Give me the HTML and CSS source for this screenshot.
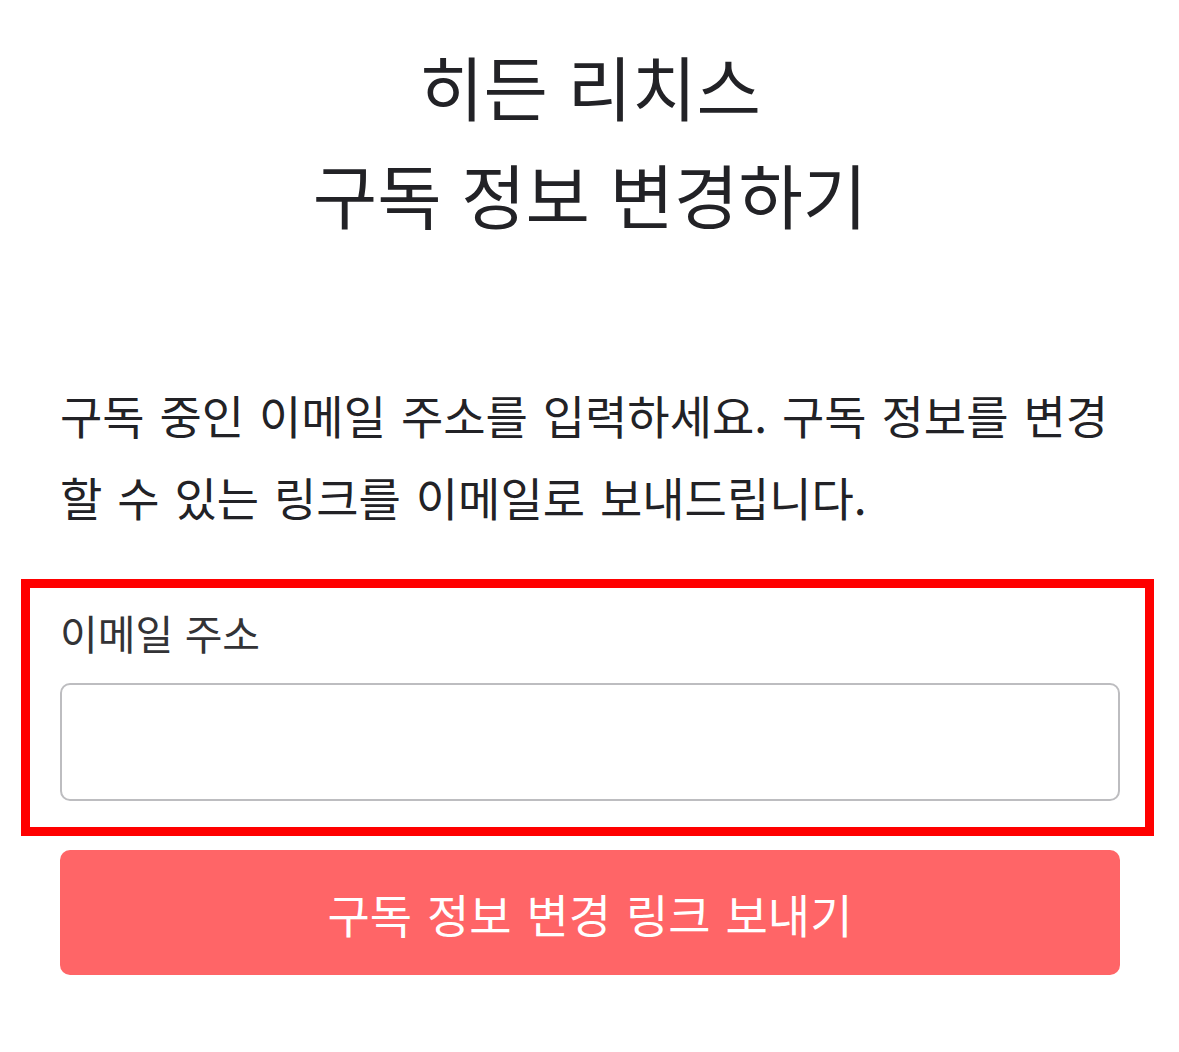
FILE: index.html
```html
<!DOCTYPE html>
<html lang="ko">
<head>
<meta charset="utf-8">
<title>히든 리치스 구독 정보 변경하기</title>
<link rel="stylesheet" href="styles.css">
</head>
<body>
<main class="page">
  <h1 class="title">히든 리치스<br>구독 정보 변경하기</h1>
  <p class="desc">구독 중인 이메일 주소를 입력하세요. 구독 정보를 변경할 수 있는 링크를 이메일로 보내드립니다.</p>
  <form class="form">
    <div class="field">
      <label class="label" for="email">이메일 주소</label>
      <input class="input" id="email" type="email">
    </div>
    <button class="button" type="button">구독 정보 변경 링크 보내기</button>
  </form>
</main>
</body>
</html>
```

FILE: styles.css
```css
* { box-sizing: border-box; }
html, body { margin: 0; padding: 0; background: #fff; }
body {
  font-family: "Noto Sans CJK KR", "Noto Sans", sans-serif;
  color: #222226;
}
.page {
  padding: 32px 59px 0 60px;
}
.title {
  margin: 0;
  text-align: center;
  font-size: 70px;
  font-weight: 400;
  line-height: 108px;
  color: #222226;
}
.desc {
  margin: 125px 0 0;
  font-size: 46px;
  line-height: 82px;
  word-spacing: 2px;
  color: #222226;
}
.form {
  margin-top: 69px;
  display: flex;
  flex-direction: column;
  gap: 49px;
}
.field {
  position: relative;
  display: flex;
  flex-direction: column;
  gap: 25px;
}
.field::after {
  content: "";
  position: absolute;
  left: -39px;
  top: -27px;
  right: -34px;
  bottom: -35px;
  border: 9px solid #ff0000;
  pointer-events: none;
}
.label {
  font-size: 41px;
  line-height: 52px;
  color: #333336;
}
.input {
  height: 118px;
  border: 2px solid #bdbdc0;
  border-radius: 10px;
  background: #fff;
  font-size: 40px;
  padding: 0 24px;
  font-family: inherit;
}
.button {
  height: 125px;
  border: none;
  border-radius: 10px;
  background: #ff6567;
  color: #fff;
  font-family: inherit;
  font-size: 46px;
  font-weight: 400;
  word-spacing: 2px;
  cursor: pointer;
}
```
